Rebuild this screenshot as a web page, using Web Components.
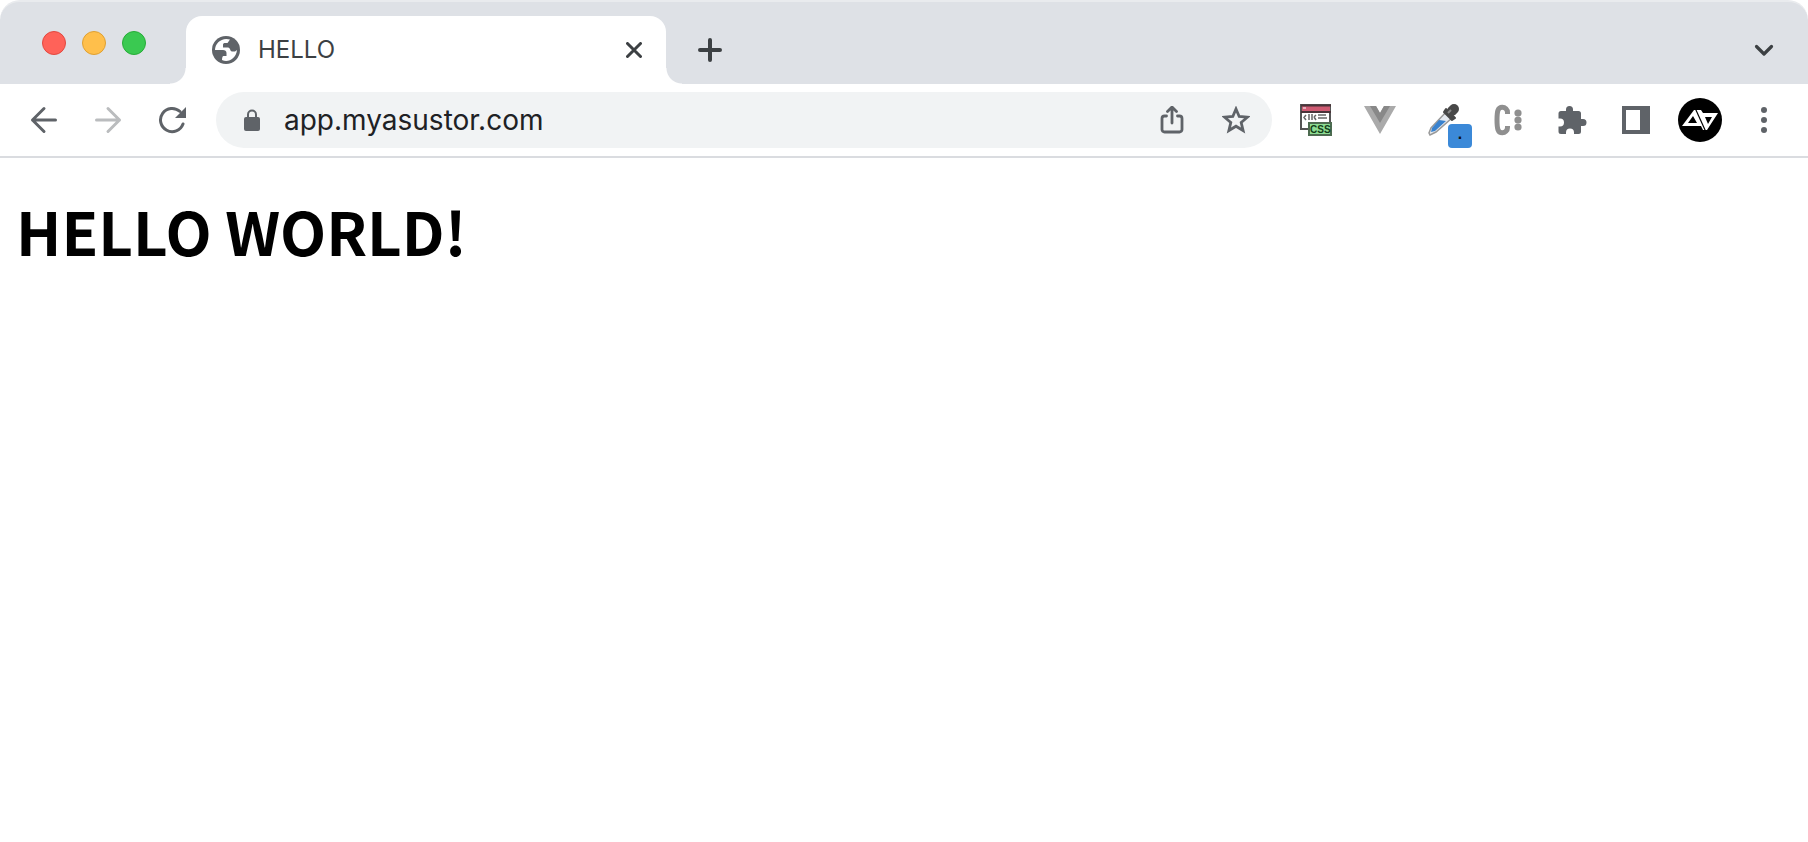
<!DOCTYPE html>
<html lang="en">
<head>
<meta charset="utf-8">
<meta name="viewport" content="width=device-width, initial-scale=1">
<title>HELLO</title>
<style>
  body { margin: 0; background: #fff; }
  h1 { margin: 0; font: 700 60px/76px "Noto Sans CJK TC", sans-serif; color: #000; }
</style>
</head>
<body>
<browser-window>
  <tab-strip slot="tabs"><browser-tab>HELLO</browser-tab></tab-strip>
  <nav-toolbar slot="toolbar" address="app.myasustor.com"></nav-toolbar>
  <h1>HELLO WORLD!</h1>
</browser-window>

<script>
const sharedStyle = `
:host { box-sizing: border-box; font-family: Inter, "Liberation Sans", sans-serif; }
* { box-sizing: border-box; }
svg { display: block; flex: none; }
`;

// each icon is [size, markup]; the view box always equals the size
const icons = {
  globe: [28, `<circle cx="14" cy="14" r="14" fill="currentColor"/><path d="M18 3.500C10 1 3 7 3 14h8c2 0 3.500 1 3.500 3v3h-3c-1 0-1.500 2-1.500 4 6 3 14-1 15-10l-2 1.500h-3c-2 0-1.500-4-4-4h-5V8.500c0-1 1-1.500 2-1.500h2.500z" fill="#fff"/>`],
  close: [16, `<path d="M1.500 1.500l13 13M14.500 1.500l-13 13" class="line" stroke-width="3"/>`],
  plus: [24, `<path d="M12 2v20M2 12h20" class="line" stroke-width="4"/>`],
  chevron: [20, `<path d="M2.500 6.500l7.500 7.500 7.500-7.500" class="line" stroke-width="3.200"/>`],
  back: [28, `<path d="M25.500 14H2.500M14 2.500L2.500 14 14 25.500" class="line" stroke-width="3"/>`],
  forward: [28, `<path d="M2.500 14h23M14 2.500L25.500 14 14 25.500" class="line" stroke-width="3"/>`],
  reload: [28, `<path d="M25 18A11.600 11.600 0 1 1 22 5.500" class="line" stroke-width="3"/><path d="M28 1v11H17z" fill="currentColor"/>`],
  lock: [24, `<rect x="4" y="9" width="16" height="14" rx="2" fill="currentColor"/><path d="M8 10V6.500a4 4 0 0 1 8 0V10" class="line" stroke-width="2"/>`],
  share: [28, `<path d="M8.500 10H6.500a2.500 2.500 0 0 0-2.500 2.500v11A2.500 2.500 0 0 0 6.500 26h15a2.500 2.500 0 0 0 2.500-2.500v-11a2.500 2.500 0 0 0-2.500-2.500H19.500M14 17V1.500M9.500 5.500L14 1l4.500 4.500" class="line" stroke-width="2.800"/>`],
  star: [28, `<path d="M14 3l3.200 7.500 8.200.700-6.200 5.300 1.900 8L14 20.200 6.900 24.500l1.900-8L2.600 11.200l8.200-.700z" fill="none" stroke="currentColor" stroke-width="2.800"/>`],
  css: [32, `<rect x="1" y="1" width="29" height="24" fill="#fff" stroke="#555" stroke-width="2"/><path d="M2 2h28v6H2z" fill="#cf5a72"/><path d="M1 1.500h30M1 8h30" stroke="#4a3339" stroke-width="2"/><path d="M3 4h3" stroke="#fff"/><path d="M6 11l-2 2.500 2 2.500M9 10v6M12 10v6M14 13l2-2M14 13l2 3M18 11h8M18 14h9" stroke="#666" stroke-width="1.500" fill="none"/><path d="M9 19h22v12H9z" fill="#8ddd92" stroke="#4d6b50" stroke-width="2"/><text x="10" y="29" font-family="Liberation Sans, sans-serif" font-size="10" font-weight="700" fill="#123d19">CSS</text>`],
  vue: [32, `<path d="M0 2h12l4 7 4-7h12L16 30z" fill="#aaa"/><path d="M6 2h6l4 7 4-7h6L16 19z" fill="#888"/>`],
  picker: [32, `<path d="M18 8l6 6L8 28l-6 3-1-2 2-5z" fill="#e5e9ef" stroke="#999" stroke-width="1.500"/><path d="M11 16l7 1L7 27l-4 1 1-4z" fill="#3982ce"/><path d="M16 8l2-3 9 9-3 2z" fill="#484848" stroke="#484848" stroke-width="2" stroke-linejoin="round"/><path d="M24 7l2-2" stroke="#484848" stroke-width="10" stroke-linecap="round"/><path d="M20 9l3-3" stroke="#888" stroke-width="2"/>`],
  cdots: [32, `<path d="M15.500 10V8.500a5.200 5.200 0 0 0-5.300-5.300C6 3.200 5 7 5 16s1 12.800 5.200 12.800a5.200 5.200 0 0 0 5.300-5.300V22" fill="none" stroke="currentColor" stroke-width="5"/><circle cx="26" cy="9" r="3.600" fill="currentColor"/><circle cx="26" cy="16" r="3.600" fill="currentColor"/><circle cx="26" cy="23" r="3.600" fill="currentColor"/>`],
  puzzle: [30, `<path d="M26 14h-2V8.500A2.500 2.500 0 0 0 21.500 6H16V4.500a3.500 3.500 0 0 0-7 0V6H4a2.500 2.500 0 0 0-2.500 2.500v5H3a4 4 0 0 1 0 8H1.500v5A2.500 2.500 0 0 0 4 29h5v-1.500a4 4 0 0 1 8 0V29h4.500a2.500 2.500 0 0 0 2.500-2.500V21h2a3.500 3.500 0 0 0 0-7z" fill="currentColor"/>`],
  panel: [28, `<path d="M0 0h28v28H0zM4 4v20h14V4z" fill="currentColor" fill-rule="evenodd"/>`],
  avatar: [44, `<circle cx="22" cy="22" r="22" fill="#000"/><path d="M16 12h4l9 20h-4l-2-4H4zM15 18l-5 7h9z" fill="#fff" fill-rule="evenodd"/><path d="M19 12h4l2 3h15L29 32h-3zM27 19l3 7 4-7z" fill="#fff" fill-rule="evenodd"/><path d="M17.500 11l10 22" stroke="#000" stroke-width="1.200"/>`],
  menu: [28, `<circle cx="14" cy="4" r="3" fill="currentColor"/><circle cx="14" cy="14" r="3" fill="currentColor"/><circle cx="14" cy="24" r="3" fill="currentColor"/>`]
};

function icon(name) {
  const [size, markup] = icons[name];
  return `<svg width="${size}" height="${size}" viewBox="0 0 ${size} ${size}" aria-hidden="true">${markup}</svg>`;
}

class BrowserWindow extends HTMLElement {
  constructor() {
    super();
    this.attachShadow({ mode: "open" }).innerHTML = `
      <style>
        ${sharedStyle}
        :host { display: flex; flex-direction: column; min-height: 100vh; background: #fff; }
        main { flex: 1; padding: 34px 16px; }
      </style>
      <slot name="tabs"></slot>
      <slot name="toolbar"></slot>
      <main><slot></slot></main>
    `;
  }
}

class TabStrip extends HTMLElement {
  constructor() {
    super();
    this.attachShadow({ mode: "open" }).innerHTML = `
      <style>
        ${sharedStyle}
        :host {
          display: flex;
          align-items: flex-end;
          height: 84px;
          background: #dee1e6;
          border-top: 2px solid #e9ebee;
          border-radius: 20px 20px 0 0;
          padding-right: 16px;
        }
        .lights { display: flex; align-self: center; gap: 16px; padding: 0 40px 0 42px; }
        button { width: 24px; height: 24px; padding: 0; border: 1px solid; border-radius: 50%; }
        .red { background: #ff6259; border-color: #e2483f; }
        .yellow { background: #ffbf4b; border-color: #dfa032; }
        .green { background: #3ac951; border-color: #27ac38; }
        .add { margin: 0 auto 0 16px; }
      </style>
      <div class="lights">
        <button class="red" aria-label="Close window"></button>
        <button class="yellow" aria-label="Minimize"></button>
        <button class="green" aria-label="Zoom window"></button>
      </div>
      <slot></slot>
      <icon-button class="add" icon="plus" label="New tab" tone="dark"></icon-button>
      <icon-button icon="chevron" label="Search tabs" tone="dark"></icon-button>
    `;
  }
}

class BrowserTab extends HTMLElement {
  constructor() {
    super();
    this.attachShadow({ mode: "open" }).innerHTML = `
      <style>
        ${sharedStyle}
        :host {
          position: relative;
          display: flex;
          align-items: center;
          gap: 18px;
          flex: 0 1 480px;
          height: 68px;
          padding: 0 4px 0 26px;
          border-radius: 16px 16px 0 0;
          background: #fff;
          color: #5f6368;
        }
        /* curved feet on both sides of the tab */
        :host::before, :host::after { content: ""; position: absolute; bottom: 0; width: 16px; height: 16px; }
        :host::before { right: 100%; background: radial-gradient(circle at 0 0, transparent 15px, #fff 16px); }
        :host::after { left: 100%; background: radial-gradient(circle at 100% 0, transparent 15px, #fff 16px); }
        .title { flex: 1; font-size: 24px; line-height: 32px; color: #3c4043; }
      </style>
      ${icon("globe")}
      <span class="title"><slot></slot></span>
      <icon-button icon="close" label="Close tab" tone="dark"></icon-button>
    `;
  }
}

class IconButton extends HTMLElement {
  constructor() {
    super();
    this.attachShadow({ mode: "open" });
  }
  connectedCallback() {
    const badge = this.getAttribute("badge");
    this.shadowRoot.innerHTML = `
      <style>
        ${sharedStyle}
        :host { display: block; flex: none; color: #5f6368; }
        :host([tone="dark"]) { color: #3c4043; }
        :host([tone="dark"]) button { height: 68px; }
        :host([tone="pale"]) { color: #babcbe; }
        :host([tone="gray"]) { color: #8f8f8f; }
        button {
          position: relative;
          display: flex;
          align-items: center;
          justify-content: center;
          width: 56px;
          height: 56px;
          padding: 0;
          border: 0;
          background: none;
          color: inherit;
        }
        .line { fill: none; stroke: currentColor; stroke-linecap: round; stroke-linejoin: round; }
        .badge {
          position: absolute;
          right: 0;
          bottom: 0;
          width: 24px;
          height: 24px;
          border-radius: 4px;
          background: #3b89d8;
          color: #111;
          font-size: 16px;
          font-weight: 600;
          line-height: 20px;
        }
      </style>
      <button type="button" aria-label="${this.getAttribute("label")}">
        ${icon(this.getAttribute("icon"))}
        ${badge ? `<span class="badge">${badge}</span>` : ""}
      </button>
    `;
  }
}

class NavToolbar extends HTMLElement {
  constructor() {
    super();
    this.attachShadow({ mode: "open" });
  }
  connectedCallback() {
    this.shadowRoot.innerHTML = `
      <style>
        ${sharedStyle}
        :host { display: block; border-bottom: 2px solid #dadce0; background: #fff; }
        nav { display: flex; align-items: center; gap: 8px; padding: 8px 16px; }
        .address {
          display: flex;
          align-items: center;
          gap: 8px;
          flex: 1;
          min-width: 0;
          height: 56px;
          margin: 0 8px;
          padding: 0 8px 0 24px;
          border-radius: 28px;
          background: #f1f3f4;
          color: #5f6368;
        }
        .line { fill: none; stroke: currentColor; }
        input {
          flex: 1;
          min-width: 0;
          height: 40px;
          padding: 0 12px;
          border: 0;
          outline: 0;
          background: none;
          color: #202124;
          font: 28px/40px Inter, "Liberation Sans", sans-serif;
        }
      </style>
      <nav>
        <icon-button icon="back" label="Back"></icon-button>
        <icon-button icon="forward" label="Forward" tone="pale"></icon-button>
        <icon-button icon="reload" label="Reload"></icon-button>
        <div class="address">
          ${icon("lock")}
          <input type="text" aria-label="Address" spellcheck="false" value="${this.getAttribute("address")}">
          <icon-button icon="share" label="Share"></icon-button>
          <icon-button icon="star" label="Bookmark"></icon-button>
        </div>
        <icon-button icon="css" label="CSS viewer"></icon-button>
        <icon-button icon="vue" label="Vue devtools"></icon-button>
        <icon-button icon="picker" label="Color picker" badge="."></icon-button>
        <icon-button icon="cdots" label="Extension" tone="gray"></icon-button>
        <icon-button icon="puzzle" label="Extensions"></icon-button>
        <icon-button icon="panel" label="Side panel"></icon-button>
        <icon-button icon="avatar" label="Profile"></icon-button>
        <icon-button icon="menu" label="Menu"></icon-button>
      </nav>
    `;
  }
}

customElements.define("icon-button", IconButton);
customElements.define("browser-tab", BrowserTab);
customElements.define("tab-strip", TabStrip);
customElements.define("nav-toolbar", NavToolbar);
customElements.define("browser-window", BrowserWindow);
</script>
</body>
</html>
